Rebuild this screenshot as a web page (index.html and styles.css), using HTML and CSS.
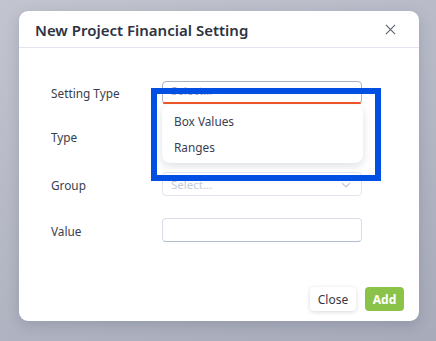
FILE: index.html
```html
<!DOCTYPE html>
<html lang="en">

<head>
    <meta charset="UTF-8">
    <meta name="viewport" content="width=device-width, initial-scale=1.0">
    <title>New Project Financial Setting</title>
    <link rel="stylesheet" href="styles.css">
</head>

<body>
    <div class="modal">
        <div class="modal-header">
            <h2 class="modal-title">New Project Financial Setting</h2>
            <button class="btn-close" aria-label="Close">
                <svg width="11" height="11" viewBox="0 0 12 12">
                    <path d="M1 1 L11 11 M11 1 L1 11" stroke="#5b6070" stroke-width="1.2" fill="none" />
                </svg>
            </button>
        </div>

        <div class="modal-body">
            <div class="form-row">
                <label class="form-label">Setting Type</label>
                <div class="field">
                    <div class="select select-open">
                        <span class="placeholder">Select...</span>
                    </div>
                    <ul class="dropdown">
                        <li class="dropdown-item">Box Values</li>
                        <li class="dropdown-item">Ranges</li>
                    </ul>
                    <div class="highlight"></div>
                </div>
            </div>

            <div class="form-row">
                <label class="form-label label-type">Type</label>
                <div class="field">
                    <!-- covered by the open dropdown -->
                    <div class="select"></div>
                </div>
            </div>

            <div class="form-row">
                <label class="form-label">Group</label>
                <div class="field">
                    <div class="select select-faded">
                        <span class="placeholder">Select...</span>
                        <svg class="chevron" width="10" height="6" viewBox="0 0 10 6">
                            <path d="M1 1 L5 5 L9 1" stroke="#c3c8d6" stroke-width="1.2" fill="none" />
                        </svg>
                    </div>
                </div>
            </div>

            <div class="form-row">
                <label class="form-label">Value</label>
                <div class="field">
                    <input class="text-input" type="text">
                </div>
            </div>
        </div>

        <div class="modal-footer">
            <button class="btn btn-light">Close</button>
            <button class="btn btn-success">Add</button>
        </div>
    </div>
</body>

</html>
```

FILE: styles.css
```css
:root {
    --text-dark: #2d3342;
    --text-label: #383e4d;
    --border-input: #d6dae6;
    --accent-orange: #f0562a;
    --frame-blue: #024fe3;
    --green: #8bc34a;
}

html,
body {
    margin: 0;
    padding: 0;
    height: 100%;
}

body {
    background: linear-gradient(160deg, #c2c5cf 0%, #b3b6c3 55%, #a7abba 100%);
    font-family: "Noto Sans", "Open Sans", sans-serif;
    padding: 11px 0 0 19px;
    box-sizing: border-box;
}

.modal {
    width: 400px;
    height: 310px;
    background-color: #fff;
    border-radius: 9px;
    box-shadow: 0 4px 14px rgba(40, 45, 70, 0.18);
    display: flex;
    flex-direction: column;
}

.modal-header {
    height: 36px;
    border-bottom: 1px solid #e3e5ee;
    display: flex;
    align-items: center;
    justify-content: space-between;
    padding: 0 23px 0 16px;
}

.modal-title {
    margin: 0;
    font-size: 15px;
    font-weight: 600;
    color: var(--text-dark);
    padding-top: 1px;
}

.btn-close {
    background: none;
    border: 0;
    padding: 0;
    display: flex;
    cursor: pointer;
}

.modal-body {
    flex: 1;
    padding: 32px 0 0 32px;
    display: flex;
    flex-direction: column;
    gap: 22px;
}

.form-row {
    display: flex;
    align-items: center;
    height: 24px;
}

.form-label {
    width: 111px;
    font-size: 11.8px;
    color: var(--text-label);
    padding-top: 1px;
}

.label-type {
    padding-top: 0;
    margin-top: -2px;
}

.field {
    position: relative;
    width: 200px;
}

.select,
.text-input {
    box-sizing: border-box;
    width: 200px;
    height: 24px;
    border: 1px solid var(--border-input);
    border-radius: 4px;
    background-color: #fff;
    display: flex;
    align-items: center;
    padding: 0 8px;
}

.text-input {
    border-color: #d9dde9;
    border-bottom-color: #b4bcd2;
    outline: 0;
}

.select-open {
    height: 23px;
    border-color: #a9b1cb;
}

.select-open::after {
    content: '';
    position: absolute;
    left: 1px;
    right: 1px;
    top: 21px;
    height: 2px;
    background-color: var(--accent-orange);
    border-radius: 1px;
}

.select-faded {
    border-color: #e1e4ec;
    justify-content: space-between;
    padding-right: 10px;
}

.placeholder {
    font-size: 11.5px;
    color: #a8b0c6;
    margin-top: -4px;
}

.select-faded .placeholder {
    color: #c4cad9;
    margin-top: 0;
}

.chevron {
    margin-top: 1px;
}

.dropdown {
    list-style: none;
    margin: 0;
    padding: 3px 0;
    position: absolute;
    top: 24px;
    left: 0;
    width: 201px;
    box-sizing: border-box;
    background-color: #fff;
    border-radius: 8px;
    box-shadow: 0 3px 8px rgba(50, 60, 90, 0.16);
    z-index: 2;
}

.dropdown-item {
    font-size: 11.8px;
    color: #3a4052;
    height: 26px;
    line-height: 26px;
    padding-left: 12px;
}

.highlight {
    position: absolute;
    left: -11px;
    top: 7px;
    width: 230px;
    height: 93px;
    box-sizing: border-box;
    border: 6px solid var(--frame-blue);
    z-index: 3;
}

.modal-footer {
    display: flex;
    justify-content: flex-end;
    gap: 9px;
    padding: 0 15px 10px 0;
}

.btn {
    border: 0;
    border-radius: 4px;
    font-family: inherit;
    font-size: 12px;
    height: 24px;
    cursor: pointer;
}

.btn-light {
    background-color: #fff;
    color: #333845;
    width: 46px;
    box-shadow: 0 1px 4px rgba(0, 0, 0, 0.16);
}

.btn-success {
    background-color: var(--green);
    color: #fff;
    font-weight: 700;
    width: 39px;
}
```
